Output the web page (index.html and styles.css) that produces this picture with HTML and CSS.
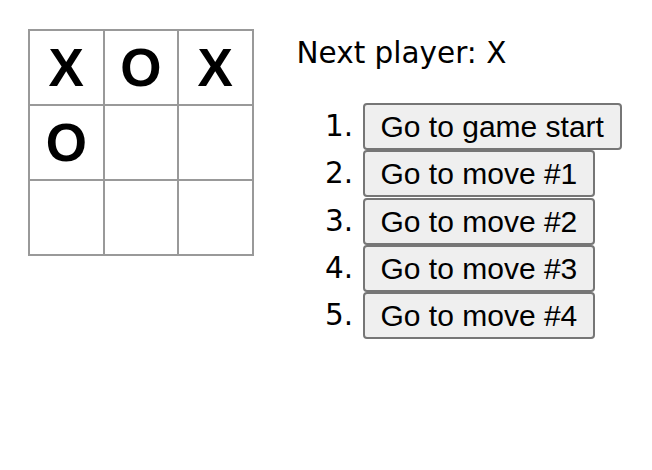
FILE: index.html
```html
<!DOCTYPE html>
<html>
<head>
<meta charset="utf-8">
<link rel="stylesheet" href="styles.css">
</head>
<body>
<div class="game">
  <div class="game-board">
    <div class="board-row">
      <button class="square">X</button>
      <button class="square">O</button>
      <button class="square">X</button>
    </div>
    <div class="board-row">
      <button class="square">O</button>
      <button class="square"></button>
      <button class="square"></button>
    </div>
    <div class="board-row">
      <button class="square"></button>
      <button class="square"></button>
      <button class="square"></button>
    </div>
  </div>
  <div class="game-info">
    <div class="status">Next player: X</div>
    <ol class="moves">
      <li><button class="move">Go to game start</button></li>
      <li><button class="move">Go to move #1</button></li>
      <li><button class="move">Go to move #2</button></li>
      <li><button class="move">Go to move #3</button></li>
      <li><button class="move">Go to move #4</button></li>
    </ol>
  </div>
</div>
</body>
</html>
```

FILE: styles.css
```css
html, body {
  margin: 0;
  background: #fff;
}
body {
  font-family: "DejaVu Sans", sans-serif;
  font-size: 29.5px;
  color: #000;
}
.game {
  display: flex;
  flex-direction: row;
  padding: 29px 0 0 28px;
}
.game-board {
  display: flex;
  flex-direction: column;
  border-top: 2px solid #999;
  border-left: 2px solid #999;
  align-self: flex-start;
}
.board-row {
  display: flex;
}
.square {
  box-sizing: border-box;
  width: 74.5px;
  height: 75px;
  margin: 0;
  padding: 0;
  background: #fff;
  border: none;
  border-right: 2px solid #999;
  border-bottom: 2px solid #999;
  font-family: "Liberation Sans", Arial, sans-serif;
  font-weight: bold;
  font-size: 53px;
  line-height: 73px;
  text-align: center;
  color: #000;
}
.game-info {
  margin-left: 43px;
  padding-top: 6px;
}
.status {
  height: 36px;
  line-height: 36px;
}
.moves {
  margin: 32px 0 0 0;
  padding-left: 66px;
}
.moves li {
  height: 47.3px;
  line-height: 47.3px;
}
.move {
  box-sizing: border-box;
  height: 47px;
  margin: 0;
  padding: 0 16px;
  vertical-align: top;
  font-family: "Liberation Sans", Arial, sans-serif;
  font-size: 30px;
  line-height: 43px;
  color: #000;
  background: #efefef;
  border: 2px solid #767676;
  border-radius: 4px;
}
```
